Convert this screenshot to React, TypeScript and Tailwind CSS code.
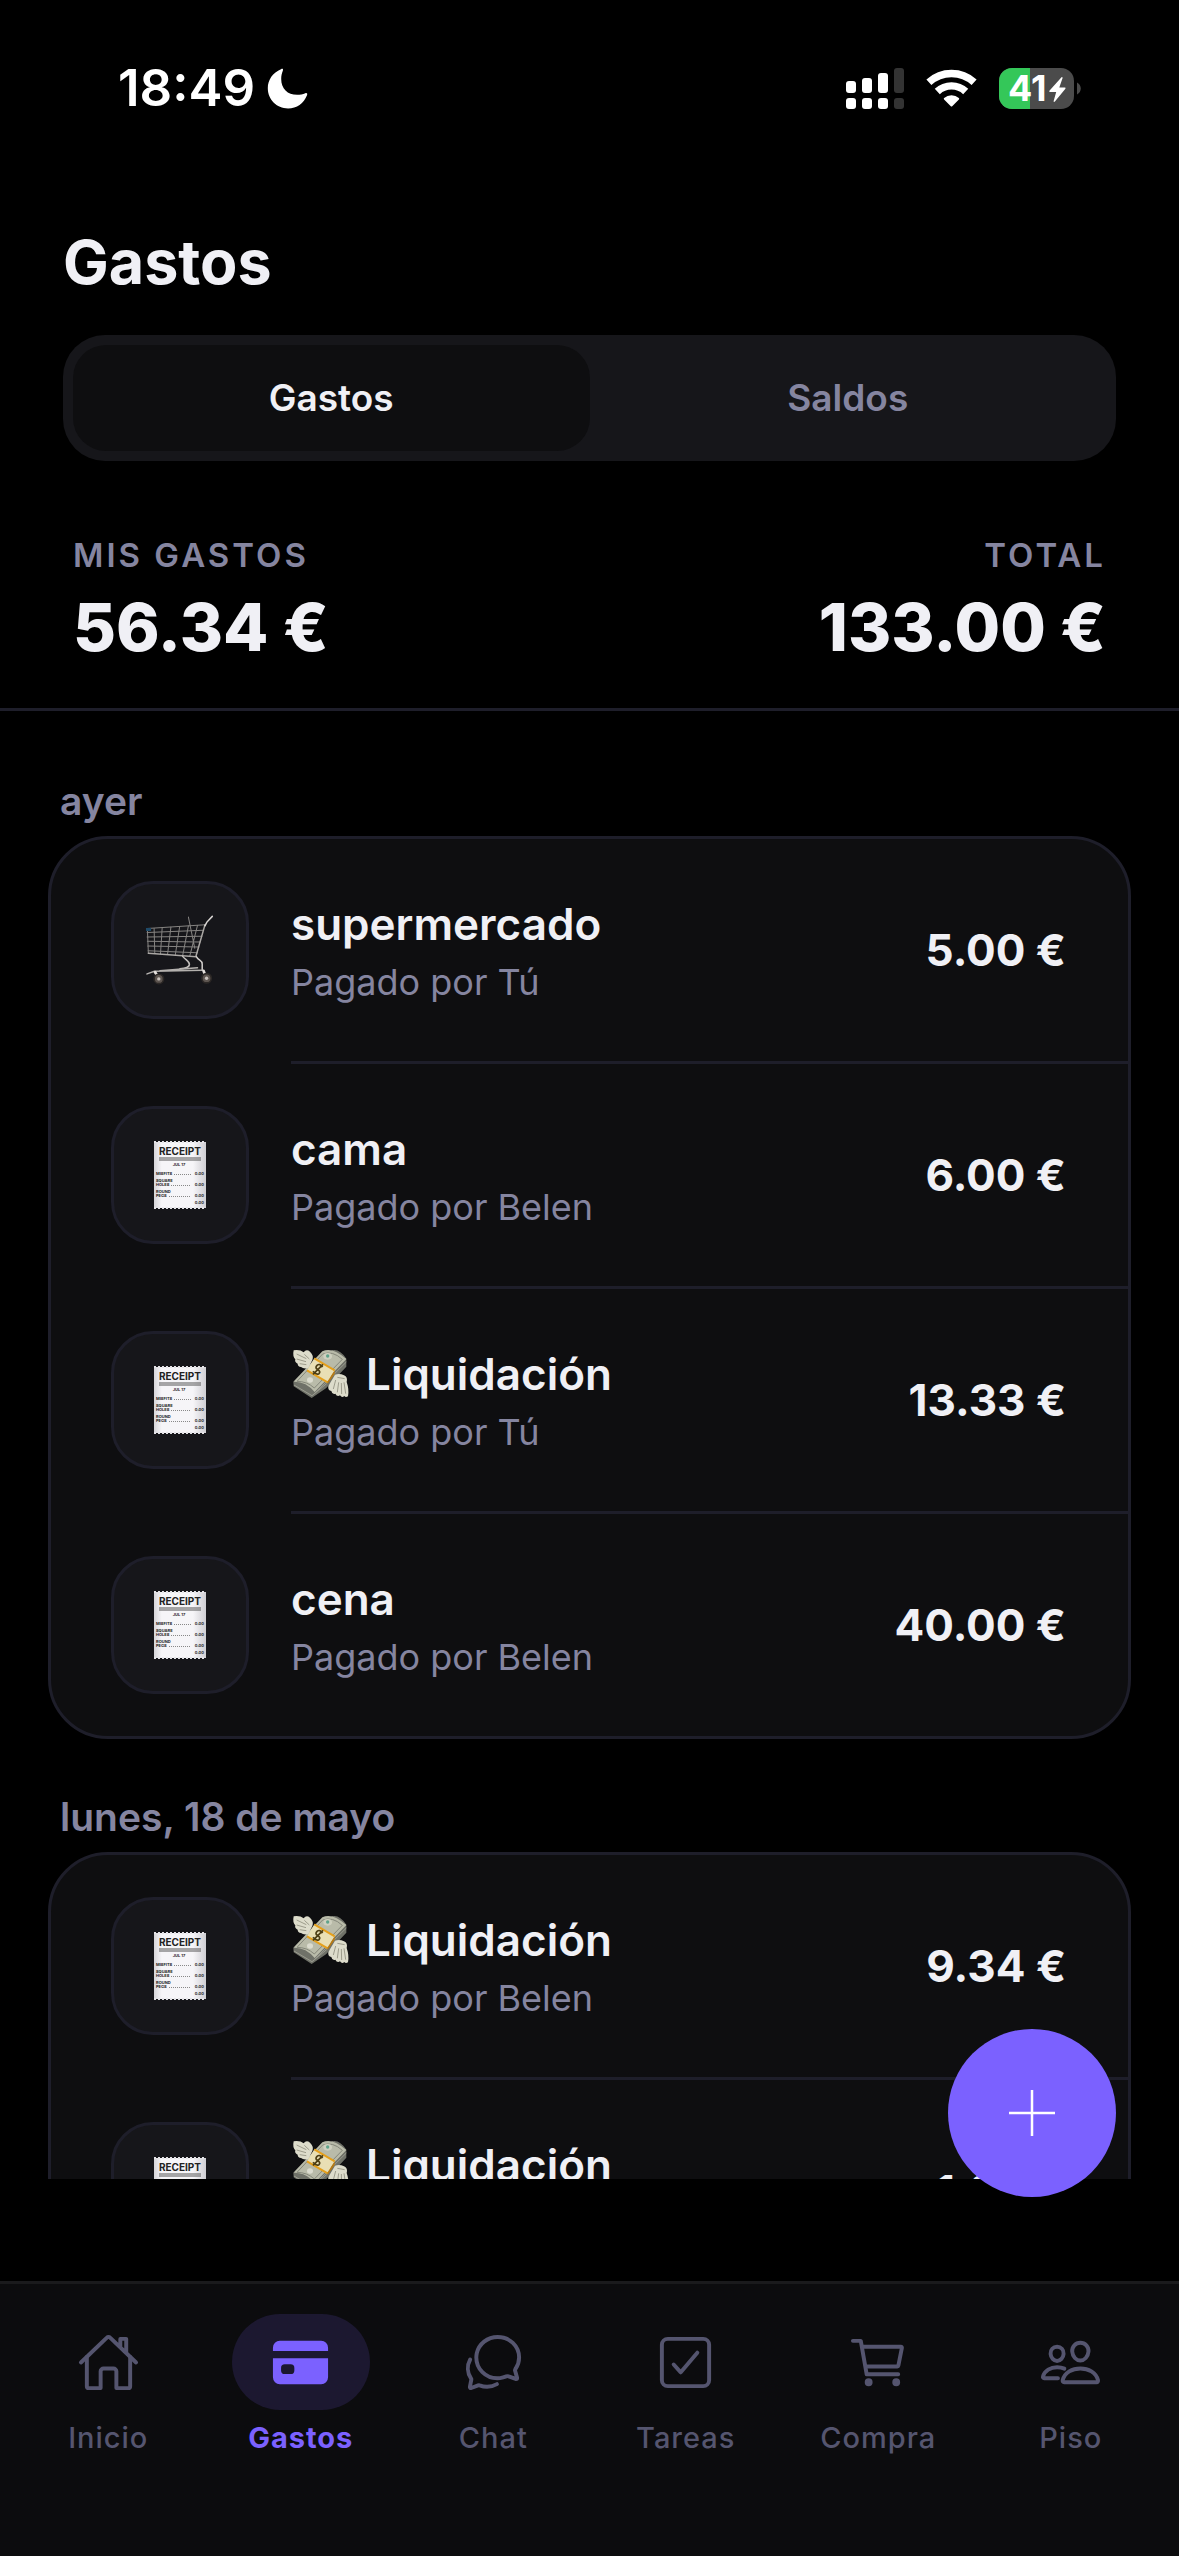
import React, { useState } from "react";
import clsx from "clsx";
import type { IconType } from "react-icons";
import { IoCard, IoCartOutline, IoChatbubblesOutline, IoCheckboxOutline, IoHomeOutline, IoPeopleOutline } from "react-icons/io5";

type Expense = {
    title: string;
    payer: string;
    amount: string;
    kind: "cart" | "receipt";
    settlement?: boolean;
};

const groups: { day: string; items: Expense[] }[] = [
    {
        day: "ayer",
        items: [
            { title: "supermercado", payer: "Tú", amount: "5.00 €", kind: "cart" },
            { title: "cama", payer: "Belen", amount: "6.00 €", kind: "receipt" },
            { title: "Liquidación", payer: "Tú", amount: "13.33 €", kind: "receipt", settlement: true },
            { title: "cena", payer: "Belen", amount: "40.00 €", kind: "receipt" },
        ]
    },
    {
        day: "lunes, 18 de mayo",
        items: [
            { title: "Liquidación", payer: "Belen", amount: "9.34 €", kind: "receipt", settlement: true },
            { title: "Liquidación", payer: "Belen", amount: "1.33 €", kind: "receipt", settlement: true },
        ]
    }
];

const navItems: { name: string; icon: IconType; active?: boolean }[] = [
    { name: "Inicio", icon: IoHomeOutline },
    { name: "Gastos", icon: IoCard, active: true },
    { name: "Chat", icon: IoChatbubblesOutline },
    { name: "Tareas", icon: IoCheckboxOutline },
    { name: "Compra", icon: IoCartOutline },
    { name: "Piso", icon: IoPeopleOutline },
];

function Moon() {
    return (
        <svg width="41" height="41" viewBox="0 0 41 41" aria-hidden="true">
            <path d="M14 1.2C15.5.4 16.4 1 15.9 2.4 14.7 5.300 14.200 8 14.200 10.900 14.200 20.500 20.500 26.800 30.100 26.800 33 26.800 35.900 26.200 38.300 25.200 39.900 24.600 40.700 25.600 40 27.200 36.900 35.200 29.700 40.500 21.100 40.500 9.500 40.500.8 31.700.8 20.100.8 11.700 5.800 4.700 14 1.200Z" fill="#fff" />
        </svg>
    );
}

function Signal() {
    return (
        <svg width="58" height="41" viewBox="0 0 58 41" fill="#fff" aria-hidden="true">
            <rect x="0" y="13" width="10" height="12" rx="3" />
            <rect x="16" y="10" width="10" height="15" rx="3" />
            <rect x="32" y="5" width="10" height="20" rx="3" />
            <rect x="48" y="0" width="10" height="25" rx="3" fill="#333" />
            <rect x="0" y="30" width="10" height="11" rx="3" />
            <rect x="16" y="30" width="10" height="11" rx="3" />
            <rect x="32" y="30" width="10" height="11" rx="3" />
            <rect x="48" y="30" width="10" height="11" rx="3" fill="#333" />
        </svg>
    );
}

function Wifi() {
    return (
        <svg width="51" height="38" viewBox="0 0 51 38" fill="none" stroke="#fff" strokeWidth="7.400" aria-hidden="true">
            <path d="M2.900 13.300A33.500 33.500 0 0 1 48.100 13.300" />
            <path d="M11.300 22.500A20.700 20.700 0 0 1 39.700 22.500" />
            <path d="M25.500 36.500 18.800 29.800A10 10 0 0 1 32.200 29.800Z" fill="#fff" stroke="#fff" strokeWidth="2" strokeLinejoin="round" />
        </svg>
    );
}

function Battery() {
    return (
        <svg width="82" height="41" viewBox="0 0 82 41" role="img" aria-label="41%">
            <clipPath id="battery-body"><rect width="75" height="41" rx="13" /></clipPath>
            <g clipPath="url(#battery-body)">
                <rect width="75" height="41" fill="#4b4b4b" />
                <rect width="31" height="41" fill="#34c759" />
            </g>
            <path d="M78 14.500C83 17 83 24 78 26.500Z" fill="#4b4b4b" />
            <text x="9" y="33" fontSize="36" fontWeight="700" fill="#fff">41</text>
            <path d="M62.500 9.200 50.400 22.800Q49.800 24 51 24H57.200L54.600 33.200Q54.700 34.600 55.900 33.600L66.400 20.800Q67 19.600 65.800 19.500H60.300L63.600 10Q63.500 8.600 62.500 9.200Z" fill="#fff" />
        </svg>
    );
}

function ShoppingCart() {
    return (
        <svg width="74" height="74" viewBox="100 100 220 220" fill="none" strokeLinecap="round" aria-hidden="true">
            <g stroke="#858381" strokeWidth="3">
                <path d="M113 146 285 135M112 158 280 151M112 171 275 169M113 184 270 186M114 198 266 201M115 212 262 218" />
                <path d="M113 147 116 220M133 146 135 220M157 144 152 222M183 142 173 223M209 140 196 225M235 138 218 226M262 137 239 228M235 112 254 205" />
            </g>
            <path d="M284 136 257 230 116 220" stroke="#aaa7a4" strokeWidth="4.500" />
            <path d="M306 110 290 127 284 138" stroke="#d9d6d4" strokeWidth="4.500" />
            <path d="M218 229C226 239 238 243 238 252 238 262 226 264 210 266" stroke="#c2bfbc" strokeWidth="4.500" />
            <path d="M259 230C264 242 277 240 276 252V270" stroke="#d2cfcc" strokeWidth="4.500" />
            <path d="M112 281 134 273 276 270M150 272 262 263" stroke="#b3b0ad" strokeWidth="4.500" />
            <path d="M136 276 146 292M280 272 287 290" stroke="#e4dfdc" strokeWidth="8" />
            <circle cx="147" cy="296" r="14" fill="#5d5550" stroke="#2b2725" strokeWidth="5" />
            <circle cx="289" cy="294" r="14" fill="#5d5550" stroke="#2b2725" strokeWidth="5" />
            <circle cx="147" cy="296" r="5" fill="#c9c2bd" />
            <circle cx="289" cy="294" r="5" fill="#c9c2bd" />
            <path d="M109 149H124" stroke="#1f4a68" strokeWidth="9" strokeLinecap="butt" />
        </svg>
    );
}

function Receipt() {
    return (
        <svg width="54" height="70" viewBox="0 0 54 70" fill="#222" fontWeight="700" aria-hidden="true">
            <linearGradient id="paper" x1="0" x2="1" y1="0" y2="0">
                <stop offset="0" stopColor="#d6d5d9" />
                <stop offset=".15" stopColor="#f6f5f8" />
                <stop offset=".75" stopColor="#f6f5f8" />
                <stop offset="1" stopColor="#cfced3" />
            </linearGradient>
            <rect x="1" y="2" width="52" height="66" fill="url(#paper)" />
            <path d="M1 2H53M1 68H53" stroke="#e4e3e7" strokeWidth="2" strokeDasharray="2 2" />
            <text x="27" y="15" fontSize="10" textAnchor="middle">RECEIPT</text>
            <path d="M6 18H48M6 20H48" stroke="#555" strokeWidth="1" />
            <text x="26" y="26" fontSize="4" textAnchor="middle">JUL 17</text>
            <g fontSize="4">
                <text x="3" y="35">MISFITS</text>
                <text x="3" y="42">SQUARE</text>
                <text x="3" y="46">HOLES</text>
                <text x="3" y="53">ROUND</text>
                <text x="3" y="57">PEGS</text>
            </g>
            <path d="M21 34.500H38M18 45.500H38M16 56.500H38" stroke="#888" strokeWidth="1" strokeDasharray="1 1" />
            <g fontSize="4" textAnchor="end">
                <text x="51" y="35">0.00</text>
                <text x="51" y="46">0.00</text>
                <text x="51" y="57">0.00</text>
                <text x="51" y="64">0.00</text>
            </g>
        </svg>
    );
}

function FlyingMoney() {
    return (
        <svg className="shrink-0" width="60" height="54" viewBox="517 144 180 162" aria-hidden="true">
            {/* stack of notes */}
            <path d="M524 249 560 229 640 154Q662 148 683 179V203L622 268 579 297 525 262Z" fill="#6f7168" />
            <path d="M524 248 611 157Q640 142 683 180L588 279Q561 246 524 248Z" fill="#b9bba9" />
            <path d="M535 247 612 165Q642 154 671 181L587 267Q565 247 535 247Z" fill="none" stroke="#85877a" strokeWidth="3" />
            <ellipse cx="627" cy="172" rx="13" ry="10" fill="#cfd0bf" />
            <circle cx="627" cy="171" r="5" fill="#5fa38b" />
            <ellipse cx="574" cy="243" rx="9" ry="8" fill="#dcdccf" />
            <path d="M526 258 580 290 624 254M589 282 683 189" fill="none" stroke="#9b9c90" strokeWidth="3" />
            {/* band */}
            <path d="M587 178 648 214 627 250 565 214Z" fill="#e9dfb4" />
            <path d="M587 178 648 214M565 214 627 250" stroke="#e5a01c" strokeWidth="6" />
            <path d="M648 214V224L627 255V247Z" fill="#b87a12" />
            <path d="M612 204Q603 192 595 199 588 207 597 212 607 217 601 224 592 229 583 217M613 196 583 226" fill="none" stroke="#4e3f14" strokeWidth="5" />
            {/* wings */}
            <path d="M525 154Q544 151 555 160 563 149 574 158 586 169 581 183L569 207Q555 211 547 204 537 203 537 194 527 190 530 181 521 172 525 154Z" fill="#dddccb" />
            <path d="M534 165 563 179M534 180 562 188M543 194 563 197M557 166 572 180" stroke="#9d9c8c" strokeWidth="3" />
            <path d="M649 227Q663 222 676 229 688 234 684 249 692 272 688 292 681 297 677 291 670 298 664 289 655 294 650 284 640 287 638 276 627 274 629 261Z" fill="#dddccb" />
            <path d="M651 243 644 270M660 250 656 280M668 252 669 285M676 250 681 284M656 235 678 239" stroke="#9d9c8c" strokeWidth="3" />
        </svg>
    );
}

function StatusBar() {
    return (
        <div className="flex items-center justify-between pt-14 pr-[98px] pl-[118px] text-white">
            <div className="flex items-center gap-3">
                <span className="text-[51px] leading-16 font-semibold">18:49</span>
                <Moon />
            </div>
            <div className="flex items-center gap-[22px]">
                <Signal />
                <Wifi />
                <Battery />
            </div>
        </div>
    );
}

function ExpenseRow({ item, last }: { item: Expense; last: boolean }) {
    return (
        <li className="flex gap-[42px] pl-[60px]">
            <div className={clsx("mt-[42px] flex size-[138px] shrink-0 items-center justify-center rounded-[42px] border-3 border-[#1e1e2a] bg-[#16161a]", last ? "mb-[42px]" : "mb-[45px]")}>
                {item.kind === "cart" ? <ShoppingCart /> : <Receipt />}
            </div>
            <div className={clsx("flex min-w-0 flex-1 items-center justify-between gap-6 pr-[62px]", !last && "border-b-3 border-[#1e1e2a]")}>
                <div className="flex min-w-0 flex-col gap-2">
                    <h3 className="flex items-center gap-[15px] text-[44px] leading-14 font-semibold">
                        {item.settlement && <FlyingMoney />}
                        {item.title}
                    </h3>
                    <p className="text-[36px] leading-11 text-[#8585a0]">Pagado por {item.payer}</p>
                </div>
                <span className="shrink-0 text-[44px] leading-14 font-bold">{item.amount}</span>
            </div>
        </li>
    );
}

export default function App() {
    const [tab, setTab] = useState("Gastos");

    return (
        <div className="relative flex h-screen flex-col overflow-hidden bg-black font-[Inter,sans-serif] text-[#f0f0f5]">
            <StatusBar />

            {/* Header */}
            <header className="border-b-3 border-[#1e1e2a] pt-[102px] pb-[41px]">
                <h1 className="px-[63px] text-[61px] leading-20 font-bold">Gastos</h1>
                <div className="mx-[63px] mt-[33px] flex rounded-[42px] bg-[#16161a] p-[10px]">
                    {["Gastos", "Saldos"].map((name) => (
                        <button
                            key={name}
                            type="button"
                            onClick={() => setTab(name)}
                            className={clsx("flex-1 rounded-[33px] py-[33px] text-[37px] leading-10 font-semibold", tab === name ? "bg-[#0e0e10]" : "text-[#8585a0]")}
                        >
                            {name}
                        </button>
                    ))}
                </div>
                <div className="mt-[74px] flex justify-between px-[73px]">
                    <div className="flex flex-col gap-3">
                        <span className="text-[33px] leading-10 font-semibold tracking-[3px] text-[#8585a0]">MIS GASTOS</span>
                        <span className="text-[66px] leading-20 font-extrabold">56.34 €</span>
                    </div>
                    <div className="flex flex-col gap-3 text-right">
                        <span className="text-[33px] leading-10 font-semibold tracking-[3px] text-[#8585a0]">TOTAL</span>
                        <span className="text-[66px] leading-20 font-extrabold">133.00 €</span>
                    </div>
                </div>
            </header>

            {/* Expenses by day */}
            <main className="mb-[102px] flex min-h-0 flex-1 flex-col gap-[54px] overflow-y-auto px-12 pt-[66px] [scrollbar-width:none]">
                {groups.map((group) => (
                    <section key={group.day} className="shrink-0">
                        <h2 className="mb-[11px] px-3 text-[39px] leading-12 font-semibold text-[#8585a0]">{group.day}</h2>
                        <ul className="rounded-[60px] border-3 border-[#1e1e2a] bg-[#0e0e10]">
                            {group.items.map((item, i) => (
                                <ExpenseRow key={i} item={item} last={i === group.items.length - 1} />
                            ))}
                        </ul>
                    </section>
                ))}
            </main>

            {/* Bottom navigation */}
            <nav className="relative flex border-t-3 border-[#1a1a1c] bg-[#0c0c0e] px-3 pt-[30px] pb-[98px]">
                <button type="button" aria-label="Añadir gasto" className="absolute right-[63px] bottom-full mb-[87px] flex size-[168px] items-center justify-center rounded-full bg-[#7b61ff]">
                    <svg width="46" height="46" viewBox="0 0 46 46" stroke="#fff" strokeWidth="2.500" aria-hidden="true">
                        <path d="M0 23H46M23 0V46" />
                    </svg>
                </button>
                {navItems.map((item) => (
                    <a key={item.name} href="#" className={clsx("flex flex-1 flex-col items-center gap-2", item.active ? "text-[#7b61ff]" : "text-[#55556f]")}>
                        <span className={clsx("flex h-24 w-[138px] items-center justify-center rounded-[48px]", item.active && "bg-[#1c1830]")}>
                            <item.icon size={63} />
                        </span>
                        <span className={clsx("text-[29px] leading-10 tracking-[1px]", item.active ? "font-bold" : "font-medium")}>{item.name}</span>
                    </a>
                ))}
            </nav>
        </div>
    );
}
